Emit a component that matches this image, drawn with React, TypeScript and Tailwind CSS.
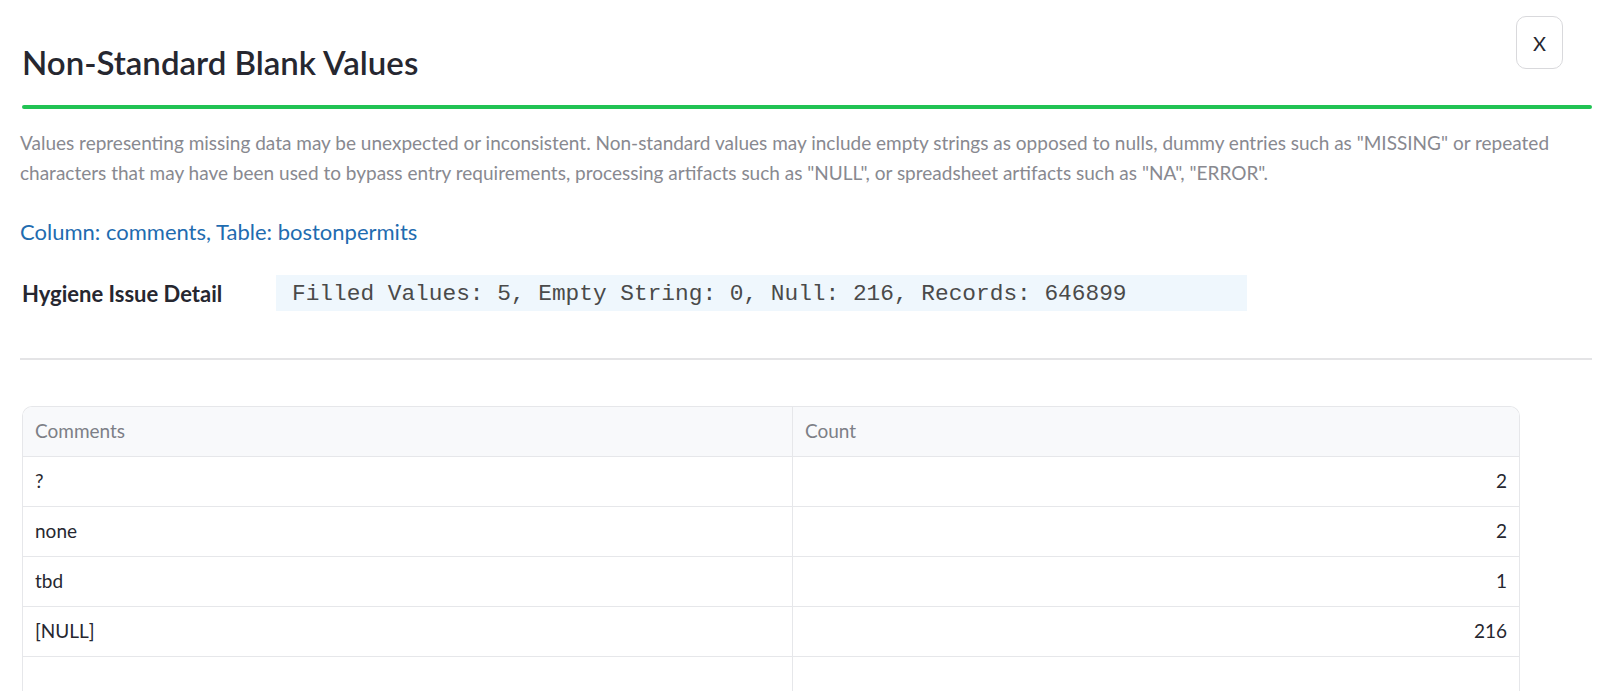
import React from "react";

const rows: { label: string; count: string }[] = [
  { label: "?", count: "2" },
  { label: "none", count: "2" },
  { label: "tbd", count: "1" },
  { label: "[NULL]", count: "216" },
  { label: "", count: "" },
];

export default function App() {
  return (
    <div className="min-h-[691px] bg-white pl-[20px] pr-[8px] pt-[16px] font-['Lato','Noto_Sans',sans-serif] text-[#31333f]">
      {/* header */}
      <div className="flex h-[89px] items-start justify-between">
        <h2 className="mt-[26px] pl-[2px] text-[33px] font-semibold leading-[40px] text-[#262730]">
          Non-Standard Blank Values
        </h2>
        <button className="mr-[29px] flex h-[53px] w-[47px] items-center justify-center rounded-[10px] border border-[#d9d9dc] bg-white text-[20px] text-[#262730]">
          X
        </button>
      </div>
      <div className="ml-[2px] h-[4px] rounded-full bg-[#21c354]" />

      {/* description */}
      <p className="mt-[19px] text-[19px] leading-[30px] text-[#888990]">
        Values representing missing data may be unexpected or inconsistent. Non-standard values may include empty strings as opposed to nulls, dummy entries such as "MISSING" or repeated
        <br />
        characters that may have been used to bypass entry requirements, processing artifacts such as "NULL", or spreadsheet artifacts such as "NA", "ERROR".
      </p>

      {/* link */}
      <div className="mt-[29px] text-[22px] leading-[30px] text-[#1f6cb0]">
        Column: comments, Table: bostonpermits
      </div>

      {/* hygiene issue detail */}
      <div className="mt-[28px] flex h-[36px] items-center">
        <div className="w-[256px] pl-[2px] text-[22px] font-bold text-[#262730]">
          Hygiene Issue Detail
        </div>
        <div className="flex h-[36px] w-[971px] items-center bg-[#eff7fd] pl-[16px] pt-[2px] font-['Liberation_Mono','Courier_New',monospace] text-[22.8px] text-[#4a4a4a]">
          Filled Values: 5, Empty String: 0, Null: 216, Records: 646899
        </div>
      </div>

      {/* divider */}
      <div className="mt-[47px] h-[2px] bg-[#e4e4e6]" />

      {/* table */}
      <div className="mt-[46px] ml-[2px] w-[1498px] overflow-hidden rounded-t-[10px] border border-b-0 border-[#e6e7ea]">
        <div className="grid grid-cols-[770px_1fr] bg-[#f8f9fb] text-[19px] text-[#7d7f87]">
          <div className="flex h-[49px] items-center border-r border-[#e6e7ea] pl-[12px]">Comments</div>
          <div className="flex h-[49px] items-center pl-[12px]">Count</div>
        </div>
        {rows.map((r, i) => (
          <div
            key={i}
            className="grid grid-cols-[770px_1fr] border-t border-[#e6e7ea] text-[19px] text-[#262730]"
          >
            <div className="flex h-[49px] items-center border-r border-[#e6e7ea] pl-[12px]">{r.label}</div>
            <div className="flex h-[49px] items-center justify-end pr-[12px]">{r.count}</div>
          </div>
        ))}
      </div>
    </div>
  );
}
